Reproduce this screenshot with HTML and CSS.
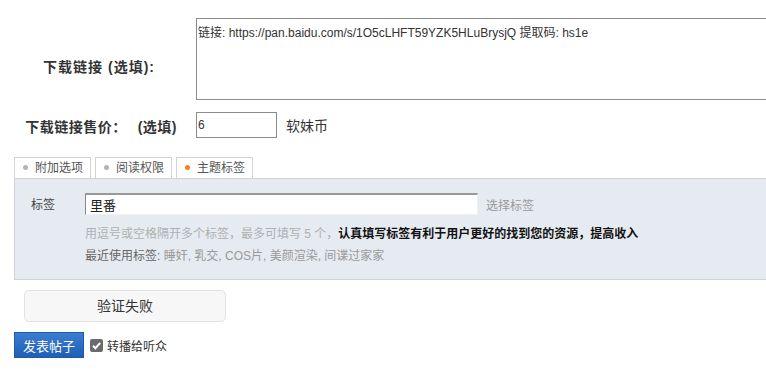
FILE: index.html
```html
<!DOCTYPE html>
<html>
<head>
    <meta charset="UTF-8">
    <title>发表帖子</title>
    <link rel="stylesheet" href="styles.css">
</head>
<body>
    <div class="post-form">
        <div class="form-row link-row">
            <div class="form-label link-label">下载链接 (选填):</div>
            <div class="form-field">
                <textarea class="link-input">链接: https://pan.baidu.com/s/1O5cLHFT59YZK5HLuBrysjQ 提取码: hs1e</textarea>
            </div>
        </div>

        <div class="form-row price-row">
            <div class="form-label price-label">下载链接售价：<span class="optional">(选填)</span></div>
            <div class="form-field">
                <input type="text" class="price-input" value="6">
                <span class="unit">软妹币</span>
            </div>
        </div>

        <!-- 附加选项 -->
        <div class="tab-box">
            <ul class="tab-list">
                <li class="tab"><span class="dot"></span>附加选项</li>
                <li class="tab"><span class="dot"></span>阅读权限</li>
                <li class="tab active"><span class="dot"></span>主题标签</li>
            </ul>
            <div class="tab-panel">
                <div class="tag-row">
                    <span class="tag-label">标签</span>
                    <input type="text" class="tag-input" value="里番">
                    <a class="tag-pick">选择标签</a>
                </div>
                <p class="tag-hint">用逗号或空格隔开多个标签，最多可填写 5 个，<strong>认真填写标签有利于用户更好的找到您的资源，提高收入</strong></p>
                <p class="tag-recent"><span class="recent-title">最近使用标签:</span> 睡奸, 乳交, COS片, 美颜渲染, 间谍过家家</p>
            </div>
        </div>

        <div class="captcha">验证失败</div>

        <div class="submit-row">
            <button class="submit-button">发表帖子</button>
            <label class="share-check">
                <span class="check-box">
                    <svg width="13" height="13" viewBox="0 0 13 13">
                        <rect x="0" y="0" width="13" height="13" rx="2" fill="#6b6b6b"/>
                        <path d="M3 6.8 L5.4 9.2 L10.2 3.8" fill="none" stroke="#fff" stroke-width="2"/>
                    </svg>
                </span>
                转播给听众
            </label>
        </div>
    </div>
</body>
</html>
```

FILE: styles.css
```css
body {
    margin: 0;
    background-color: #fff;
    font-family: "Liberation Sans", "Noto Sans CJK SC", sans-serif;
    font-size: 12px;
    color: #333;
    overflow: hidden;
}

.post-form {
    width: 820px;
    padding-top: 18px;
}

.form-row {
    display: flex;
}

.form-label {
    width: 196px;
    box-sizing: border-box;
    text-align: right;
    font-weight: bold;
    font-size: 14px;
    color: #333;
}

.link-label {
    padding-top: 38px;
    padding-right: 41px;
    letter-spacing: 1px;
}

.link-input {
    display: block;
    width: 600px;
    height: 82px;
    box-sizing: border-box;
    margin: 0;
    padding: 4px 0 0 1px;
    border: 1px solid #8c8c8c;
    font-family: "Liberation Sans", "Noto Sans CJK SC", sans-serif;
    font-size: 12px;
    color: #333;
    resize: none;
}

.price-row {
    margin-top: 12px;
    align-items: center;
}

.price-label {
    padding-top: 1px;
    padding-right: 19px;
    letter-spacing: 0.5px;
}

.optional {
    margin-left: 11px;
}

.price-row .form-field {
    display: flex;
    align-items: center;
}

.price-input {
    width: 81px;
    height: 26px;
    box-sizing: border-box;
    margin: 0;
    padding: 0 0 0 1px;
    border: 1px solid #8c8c8c;
    font-family: "Liberation Sans", "Noto Sans CJK SC", sans-serif;
    font-size: 12px;
    color: #333;
}

.unit {
    margin-left: 9px;
    font-size: 14px;
    color: #333;
}

/* 标签面板 */
.tab-box {
    margin: 19px 0 0 14px;
}

.tab-list {
    display: flex;
    gap: 4px;
    margin: 0;
    padding: 0;
    list-style: none;
}

.tab {
    height: 20px;
    line-height: 20px;
    padding: 0 7px 0 8px;
    border: 1px solid #d3d3d3;
    border-bottom: none;
    background-color: #fff;
    color: #555;
    font-size: 12px;
}

.dot {
    display: inline-block;
    width: 5px;
    height: 5px;
    margin-right: 7px;
    border-radius: 50%;
    background-color: #b4b4b4;
    vertical-align: middle;
    position: relative;
    top: -1px;
}

.tab.active .dot {
    background-color: #f08228;
}

.tab-panel {
    height: 102px;
    padding: 14px 0 0 16px;
    box-sizing: border-box;
    border: 1px solid #cfd3d8;
    background-color: #e6ebf2;
}

.tag-row {
    display: flex;
    align-items: center;
}

.tag-label {
    width: 54px;
    margin-top: -2px;
    color: #444;
}

.tag-input {
    width: 393px;
    height: 22px;
    box-sizing: border-box;
    margin: 0;
    padding: 0 0 0 4px;
    border: 1px solid #f0f0f0;
    border-top: 2px solid #999;
    border-left: 1px solid #888;
    background-color: #fff;
    font-family: "Liberation Sans", "Noto Sans CJK SC", sans-serif;
    font-size: 13px;
    color: #222;
}

.tag-pick {
    margin-left: 8px;
    color: #999;
}

.tag-hint {
    margin: 9px 0 0 54px;
    color: #b0b0b0;
}

.tag-hint strong {
    color: #111;
}

.tag-recent {
    margin: 5px 0 0 54px;
    color: #999;
}

.recent-title {
    color: #666;
}

/* 验证 */
.captcha {
    width: 200px;
    height: 30px;
    line-height: 30px;
    margin: 10px 0 0 24px;
    border: 1px solid #e3e3e3;
    border-radius: 5px;
    background-color: #f7f7f7;
    text-align: center;
    font-size: 14px;
    color: #333;
}

.submit-row {
    display: flex;
    align-items: center;
    margin: 10px 0 0 14px;
}

.submit-button {
    width: 70px;
    height: 26px;
    margin: 0;
    padding: 0;
    border: 1px solid #1d5aa8;
    background: linear-gradient(#3a7dd0, #1f5fb5);
    color: #fff;
    font-family: "Liberation Sans", "Noto Sans CJK SC", sans-serif;
    font-size: 13px;
}

.share-check {
    display: flex;
    align-items: center;
    margin-left: 6px;
    font-size: 12px;
    color: #333;
}

.check-box {
    display: flex;
    margin-right: 4px;
}
```
